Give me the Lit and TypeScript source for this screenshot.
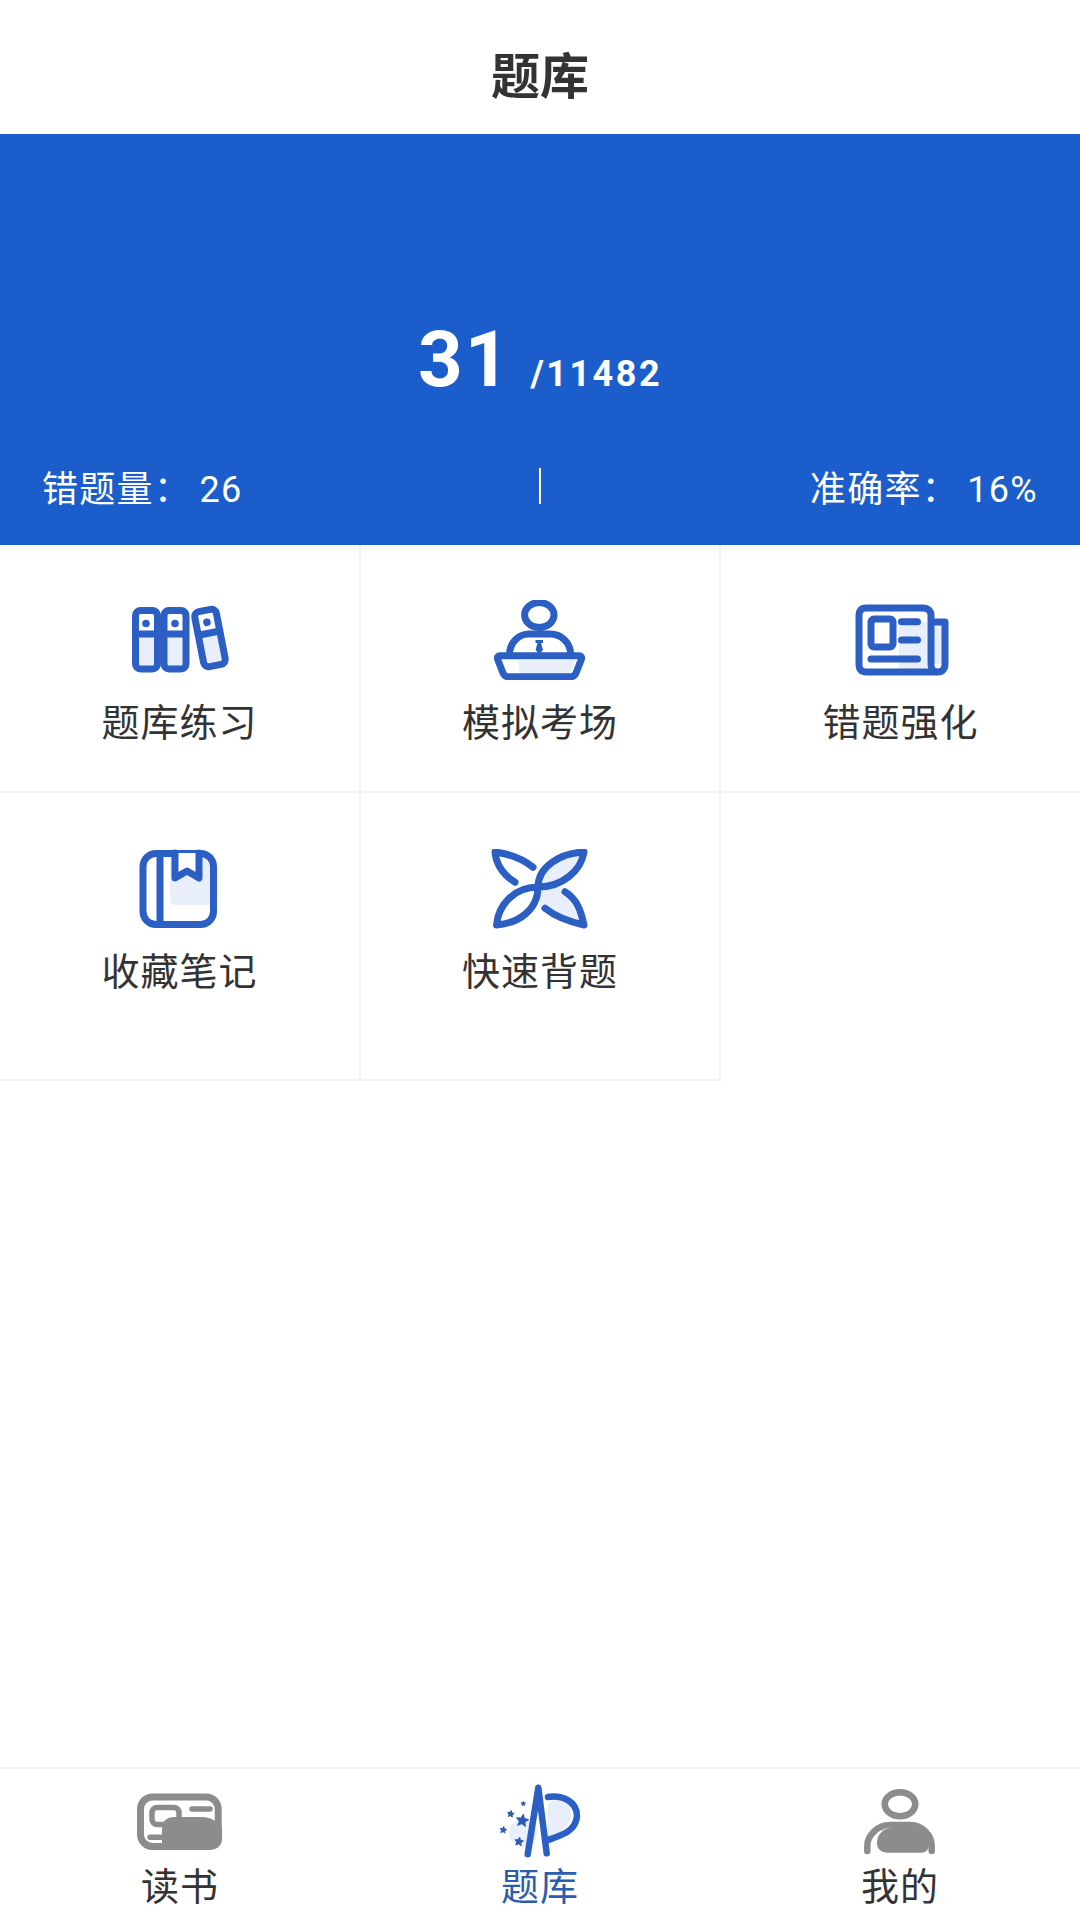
import { LitElement, html, css, svg } from "lit";
import { customElement } from "lit/decorators.js";

const B = "#2c5fc4";
const L = "#e8eefa";
const G = "#8c8c8c";

function star(cx: number, cy: number, r: number) {
  const pts: string[] = [];
  for (let i = 0; i < 10; i++) {
    const rad = i % 2 ? r * 0.45 : r;
    const a = -Math.PI / 2 + (i * Math.PI) / 5 + 0.15;
    pts.push(`${(cx + rad * Math.cos(a)).toFixed(1)},${(cy + rad * Math.sin(a)).toFixed(1)}`);
  }
  return svg`<polygon points="${pts.join(" ")}" fill="#2b58b4" stroke="#2b58b4" stroke-width="1" stroke-linejoin="round"/>`;
}

const icons: Record<string, unknown> = {
  books: svg`<svg class="ic" viewBox="0 0 100 80" fill="none">
    <rect x="8" y="36" width="16" height="31" fill="${L}"/><rect x="37" y="36" width="16" height="31" fill="${L}"/>
    <g stroke="${B}" stroke-width="7">
      <rect x="5.500" y="10.500" width="22" height="58.500" rx="5"/>
      <rect x="34" y="10.500" width="22" height="58.500" rx="5"/>
      <path d="M5 34H27M34 34H56"/>
    </g>
    <circle cx="16" cy="23.500" r="3.800" fill="${B}"/><circle cx="45" cy="23.500" r="3.800" fill="${B}"/>
    <g transform="rotate(-11 80 38)">
      <rect x="72" y="36" width="16" height="28" fill="${L}"/>
      <rect x="69" y="10" width="22" height="56" rx="5" stroke="${B}" stroke-width="7"/>
      <path d="M69 33H91" stroke="${B}" stroke-width="7"/>
      <circle cx="80" cy="22" r="3.800" fill="${B}"/>
    </g>
  </svg>`,
  exam: svg`<svg class="ic" viewBox="0 0 100 80" fill="none" stroke="${B}" stroke-width="7" stroke-linecap="round" stroke-linejoin="round">
    <path d="M28 60H86L79 74H30Z" fill="${L}" stroke="none"/>
    <ellipse cx="49.300" cy="15" rx="14.700" ry="12.500"/>
    <path d="M19.500 54C20 42 29 34 39 34H60C71 34 80 42 80.700 54"/>
    <path d="M10 55.700H89C91 55.700 92 57 91.500 59L86 73C85 75.500 83.500 76.700 81 76.700H18C15.500 76.700 14 75.500 13 73L7.500 59C7 57 8 55.700 10 55.700Z"/>
    <path d="M45.500 40H53V43H51L53 50L49.300 54L45.500 50L47.500 43H45.500Z" fill="${B}" stroke="none"/>
  </svg>`,
  news: svg`<svg class="ic" viewBox="0 0 100 80" fill="none" stroke="${B}" stroke-width="7" stroke-linecap="round" stroke-linejoin="round">
    <path d="M48 22H76V70H48Z" fill="${L}" stroke="none"/><rect x="81" y="22" width="11" height="42" fill="${L}" stroke="none"/>
    <path d="M80 22H94V64C94 69 91 72 87 72H15C10 72 8 69 8 65V15C8 11 10 8 15 8H72C77 8 80 11 80 15V65C80 69 83 72 87 72"/>
    <rect x="20" y="19" width="22" height="28" rx="3" fill="#fff"/>
    <path d="M50.500 21.700H66.500M50.500 40H66.500M20 59H66.500"/>
  </svg>`,
  note: svg`<svg class="ic" viewBox="0 0 100 80" fill="none" stroke="${B}" stroke-width="7" stroke-linecap="round" stroke-linejoin="round">
    <path d="M40 5H84V56H46C42 56 40 54 40 50Z" fill="${L}" stroke="none"/>
    <rect x="13" y="4.500" width="70.500" height="71" rx="13"/>
    <path d="M30 4V76" stroke-linecap="butt"/>
    <path d="M45 4V29L57 22L69 29V4" fill="#fff"/>
  </svg>`,
  fast: svg`<svg class="ic" viewBox="0 0 100 80" fill="none" stroke="${B}" stroke-width="7" stroke-linecap="round" stroke-linejoin="round">
    <path d="M94 2C70 4 50 18 50 38C72 38 91 22 94 2Z" fill="${L}" stroke="none"/>
    <path d="M50 38H72L94 76C78 74 58 66 50 58Z" fill="${L}" stroke="none"/>
    <path d="M43 18.300C33 10 20 5 5 3C6 14 12 25 25 33.300"/>
    <path d="M6.500 76C8.500 55 25 38 48 38C72 38 91 22 94 3C70 4 48 18 48 38C48 60 30 74 6.500 76Z"/>
    <path d="M75 42.700C87 50 91 62 94 76C80 73 66 68 55 59.300"/>
  </svg>`,
};

const tabBook = svg`<svg class="tb" viewBox="0 -10 100 80" fill="none">
  <rect x="10.500" y="6" width="77.700" height="49.500" rx="12" stroke="${G}" stroke-width="7"/>
  <rect x="22" y="16.500" width="27" height="17" rx="5" stroke="${G}" stroke-width="5.500"/>
  <path d="M62 18H80M20 46.300H33" stroke="${G}" stroke-width="5.500" stroke-linecap="round"/>
  <path d="M32 38C32 30 37 26 44 26H72C80 26 87 30 92 36V48C92 55 86 59 80 59H32Z" fill="${G}"/>
</svg>`;
const tabBank = svg`<svg class="tb" viewBox="0 0 100 80" fill="none">
  <path d="M58 22C72 14 82 22 81 35C80 46 70 52 58 57Z" fill="${L}"/>
  <circle cx="33" cy="52" r="14" fill="${L}"/>
  <path d="M37.700 73.300L48.300 6.700L56.700 72.300M58 16C72 14 87 20 87 35C86 50 72 54 58 59" stroke="${B}" stroke-width="6.500" stroke-linecap="round" stroke-linejoin="round"/>
  ${star(32.3, 39.7, 6.5)}${star(20.7, 33, 3.5)}${star(13.3, 49, 3.5)}${star(29, 60.7, 4.5)}${star(33.3, 22.7, 2.2)}
</svg>`;
const tabMe = svg`<svg class="tb" viewBox="0 -10 100 80" fill="none">
  <ellipse cx="50" cy="13.300" rx="15.300" ry="12" stroke="${G}" stroke-width="6.500"/>
  <path d="M17.300 60V55C17.300 44 28 34 40 34H60C72 34 81.700 44 81.700 55V60" stroke="${G}" stroke-width="6.500" stroke-linecap="round"/>
  <path d="M27 52C27 43 34 37 42 37H60C70 37 79 44 79 52C79 58 77 61.700 71 61.700H38C31 61.700 27 58 27 52Z" fill="${G}"/>
</svg>`;

@customElement("app-root")
export class AppRoot extends LitElement {
  static styles = css`
    :host {
      display: flex; flex-direction: column; width: 1080px; height: 1920px; background: #fff;
      font-family: Roboto, "Noto Sans CJK SC", sans-serif; color: #333;
    }
    .title { height: 134px; box-sizing: border-box; padding-top: 10px; display: flex; align-items: center; justify-content: center; font-size: 49px; font-weight: 700; }
    .hero { height: 411px; background: #1b5ecb; color: #fff; display: flex; flex-direction: column; box-sizing: border-box; padding: 180px 42px 0; }
    .count { display: flex; justify-content: center; align-items: baseline; gap: 19px; font-weight: 700; height: 146px; line-height: 92px; }
    .big { font-size: 78px; letter-spacing: 2px; }
    .small { font-size: 36px; letter-spacing: 2.5px; }
    .stats { display: grid; grid-template-columns: 1fr 2px 1fr; align-items: center; font-size: 36px; letter-spacing: 1.3px; word-spacing: -2px; height: 36px; }
    .stats span:last-child { text-align: right; }
    .div { height: 36px; background: #fff; }
    .grid { display: grid; grid-template-columns: 361px 360px 359px; grid-template-rows: 248px 288px; }
    .cell { box-sizing: border-box; display: flex; flex-direction: column; align-items: center; padding-top: 55px; border-right: 2px solid #f3f4f6; border-bottom: 2px solid #f3f4f6; }
    .cell:nth-child(3) { border-right: none; }
    .cell:nth-child(n+4) { padding-top: 56px; }
    .ic { width: 100px; height: 80px; display: block; }
    .label { margin-top: 18px; font-size: 38px; line-height: 50px; letter-spacing: 1px; }
    .spacer { flex: 1; }
    .tabs { height: 153px; box-sizing: border-box; border-top: 2px solid #f3f4f6; display: grid; grid-template-columns: repeat(3, 360px); }
    .tab { display: flex; flex-direction: column; align-items: center; padding-top: 12px; }
    .tb { width: 100px; height: 80px; display: block; }
    .tl { font-size: 38px; line-height: 44px; letter-spacing: 1px; margin-top: 4px; }
    .on { color: #2a5cb0; }
  `;

  render() {
    const cells = [
      ["books", "题库练习"], ["exam", "模拟考场"], ["news", "错题强化"],
      ["note", "收藏笔记"], ["fast", "快速背题"],
    ];
    return html`
      <div class="title">题库</div>
      <div class="hero">
        <div class="count"><span class="big">31</span><span class="small">/11482</span></div>
        <div class="stats"><span>错题量： 26</span><span class="div"></span><span>准确率： 16%</span></div>
      </div>
      <div class="grid">
        ${cells.map(([k, t]) => html`<div class="cell">${icons[k]}<div class="label">${t}</div></div>`)}
      </div>
      <div class="spacer"></div>
      <div class="tabs">
        <div class="tab">${tabBook}<div class="tl">读书</div></div>
        <div class="tab">${tabBank}<div class="tl on">题库</div></div>
        <div class="tab">${tabMe}<div class="tl">我的</div></div>
      </div>
    `;
  }
}
